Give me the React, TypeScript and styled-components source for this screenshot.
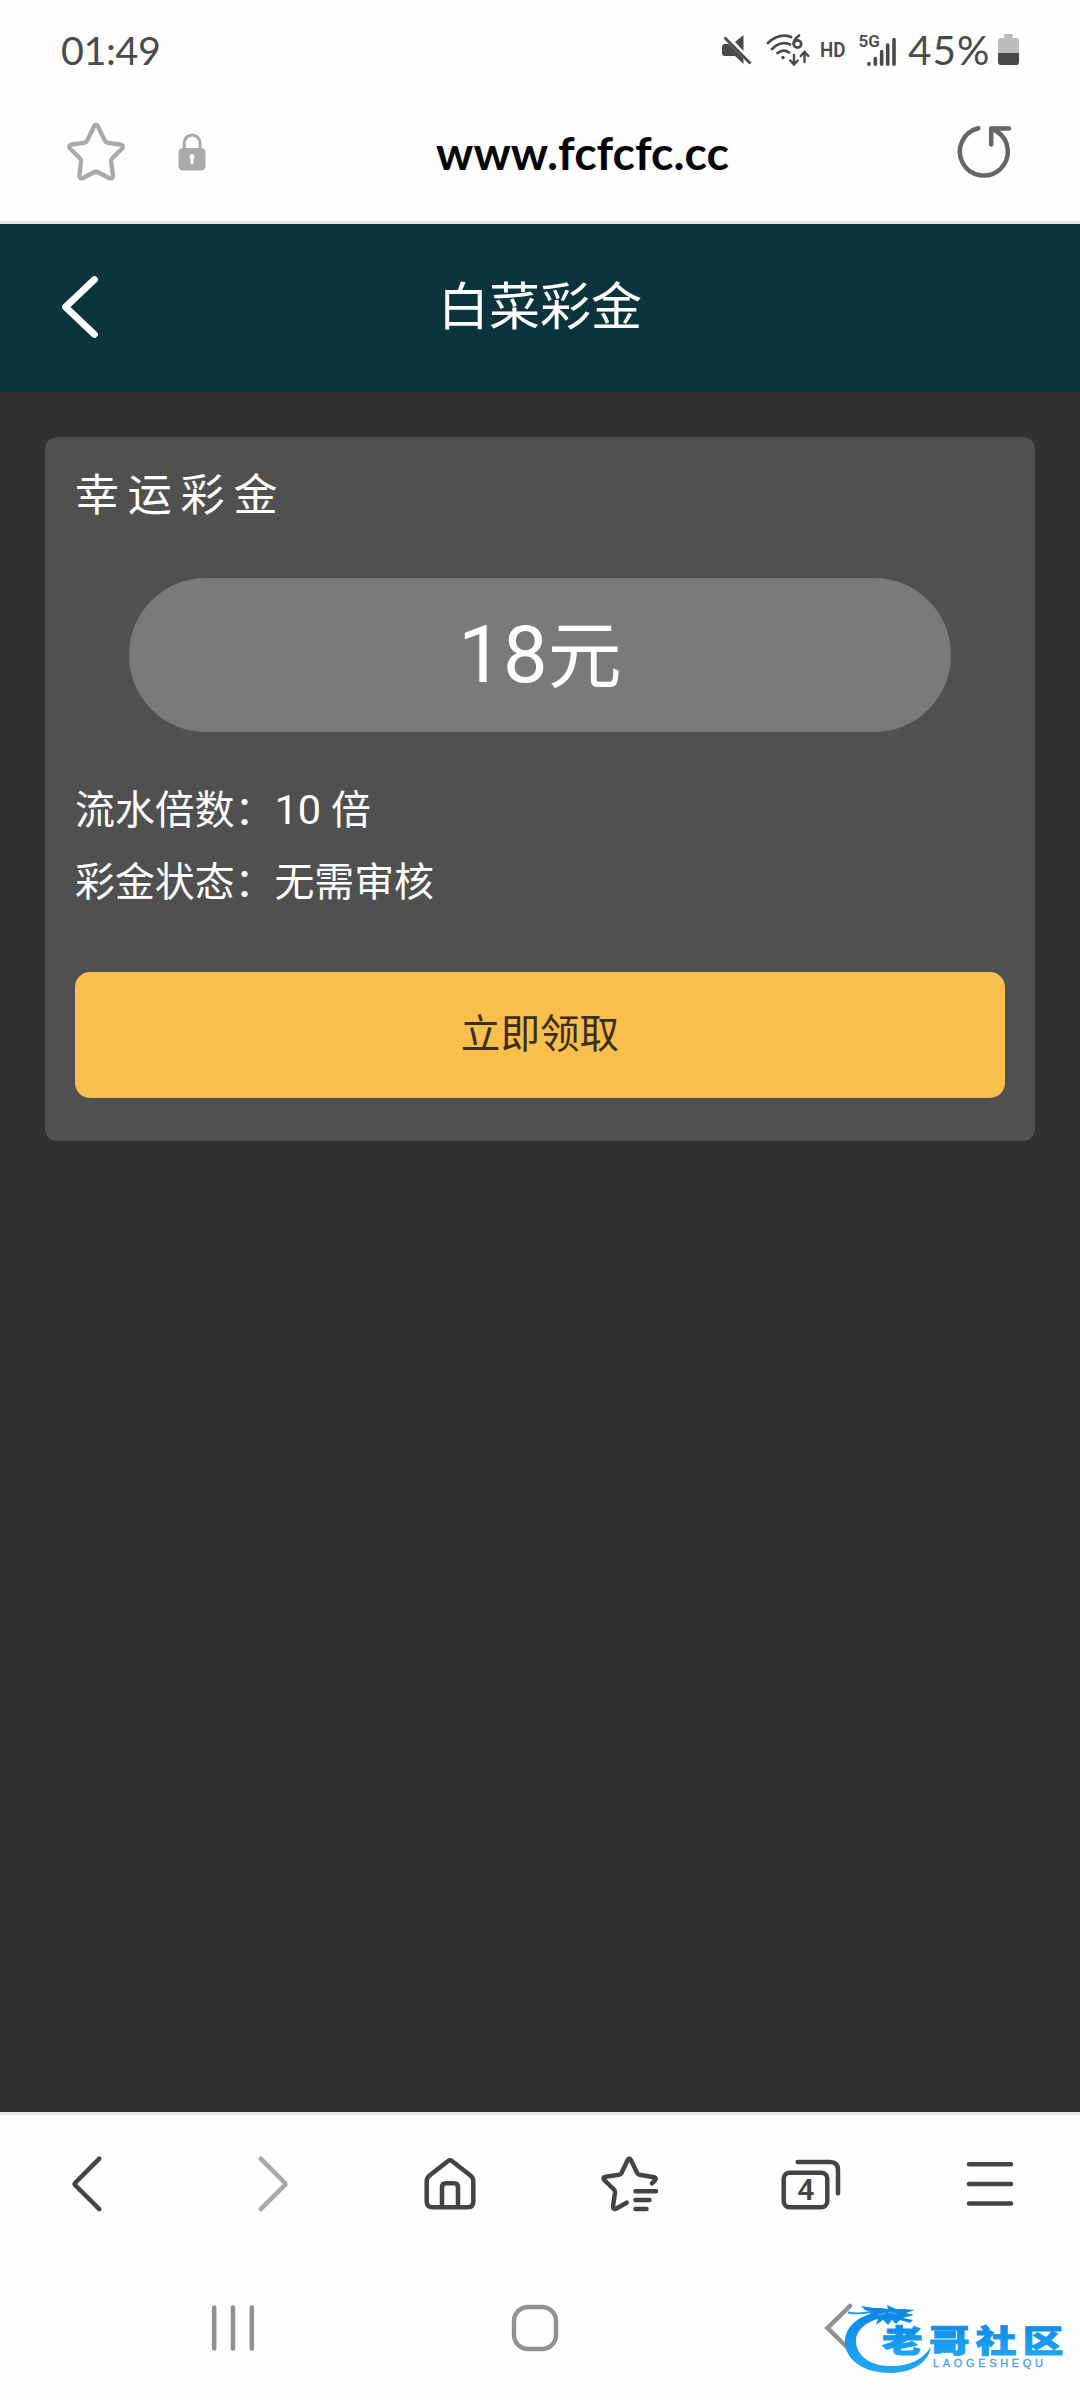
import React from "react";
import styled, { createGlobalStyle } from "styled-components";

const INK = "#444444";
const cjk = `Roboto, "Noto Sans CJK SC", sans-serif`;

const GlobalStyle = createGlobalStyle`
  * { box-sizing: border-box; }
  body { margin: 0; background: #fefefe; }
`;

const Screen = styled.div`
  position: relative;
  display: flex;
  flex-direction: column;
  width: 1080px;
  height: 2400px;
  background: #fefefe;
  overflow: hidden;
  font-family: ${cjk};
`;

const StatusBar = styled.header`
  display: flex;
  flex: none;
  align-items: center;
  height: 100px;
  padding: 0 61px 0 61px;
  color: #4a4a4a;
`;

const Clock = styled.span`
  flex: 1;
  font: 400 39.5px/100px Lato, sans-serif;
  letter-spacing: -0.4px;
`;

const StatusIcon = styled.svg<{ $gap: number }>`
  flex: none;
  margin-right: ${(p) => p.$gap}px;
`;

const Percent = styled.span`
  width: 90px;
  font: 400 40.5px/100px Lato, sans-serif;
  white-space: nowrap;
  letter-spacing: 1px;
`;

const AddressBar = styled.div`
  display: grid;
  flex: none;
  grid-template-columns: 60px 28px 1fr 60px;
  column-gap: 52px;
  align-items: center;
  height: 124px;
  padding: 0 66px 17px;
  border-bottom: 3px solid #dfe5e5;
`;

const Url = styled.span`
  padding-left: 5px;
  text-align: center;
  font: 700 46.5px/60px Lato, sans-serif;
  color: #050505;
  white-space: nowrap;
`;

const TitleBar = styled.div`
  display: grid;
  flex: none;
  grid-template-columns: 60px 1fr 60px;
  align-items: center;
  height: 168px;
  padding: 0 50px;
  background: #0c343c;
`;

const PageTitle = styled.h1`
  margin: 0;
  text-align: center;
  font-size: 51px;
  line-height: 80px;
  font-weight: 400;
  color: #fff;
`;

const Page = styled.main`
  flex: none;
  height: 1720px;
  padding: 45px;
  background: #303030;
`;

const Card = styled.section`
  display: flex;
  flex-direction: column;
  height: 704px;
  padding: 29px 30px 43px;
  border-radius: 12px;
  background: #505050;
  color: #fff;
`;

const CardTitle = styled.h2`
  margin: 0 0 52px;
  font-size: 44px;
  line-height: 60px;
  font-weight: 400;
  letter-spacing: 8.8px;
`;

const Amount = styled.div`
  display: flex;
  align-items: baseline;
  justify-content: center;
  height: 154px;
  margin: 0 54px;
  border-radius: 77px;
  background: #7a7a7a;
  font-size: 79.5px;
  line-height: 154px;
`;

const Unit = styled.span`
  font-size: 74px;
`;

const Details = styled.div`
  display: flex;
  flex-direction: column;
  margin-top: 42px;
`;

const Detail = styled.p`
  margin: 0;
  font-size: 39.9px;
  line-height: 72px;
`;

const Figure = styled.span`
  font-size: 41.5px;
`;

const ClaimButton = styled.button`
  height: 126px;
  margin: auto 0 0;
  padding: 0 0 9px;
  border: 0;
  border-radius: 15px;
  background: #f8bf4c;
  color: #3b2e14;
  font-family: ${cjk};
  font-size: 39.6px;
`;

const Toolbar = styled.nav`
  display: grid;
  flex: none;
  grid-template-columns: repeat(6, 180px);
  justify-items: center;
  align-items: center;
  height: 141px;
  border-top: 3px solid #e8e8e8;
`;

const SystemNav = styled.nav`
  display: flex;
  flex: none;
  align-items: center;
  gap: 252px;
  height: 147px;
  padding: 3px 0 0 208px;
`;

const Watermark = styled.svg`
  position: absolute;
  left: 840px;
  top: 2296px;
`;

type ToolProps = { color?: string; children: React.ReactNode };
const Tool = ({ color = INK, children }: ToolProps) => (
  <svg width="72" height="72" viewBox="0 0 72 72" fill="none" stroke={color}
    strokeWidth="4.5" strokeLinecap="round" strokeLinejoin="round">
    {children}
  </svg>
);

const StatusIcons = () => (
  <>
    <StatusIcon $gap={14} width="30" height="36" viewBox="0 0 30 36">
      <path d="M0 15q0-3 3-3h4L21.500 26.500V32L13 24H3q-3 0-3-3z" fill="#4a4a4a" />
      <path d="M13 10 21.500 3v16z" fill="#4a4a4a" />
      <path d="M2.500 5.500 28.500 31.500" stroke="#4a4a4a" strokeWidth="2.800" />
    </StatusIcon>
    <StatusIcon $gap={10} width="44" height="36" viewBox="0 0 44 36" fill="none"
      stroke="#4a4a4a" strokeWidth="2.700" strokeLinecap="round">
      <path d="M2 11Q13 .5 25 5M6 17Q15 8.500 24 12.500M11.500 21Q17.500 16.500 23 20.500" />
      <circle cx="17" cy="25.500" r="1.700" fill="#4a4a4a" stroke="none" />
      <path d="M28 23v9m-3.800-3.500L28 32.500l3.800-4M38.500 30V20m-3.800 4 3.800-4.200 3.800 4.200" strokeWidth="2.400" />
      <path d="M33 3.500Q28 7 27.500 12" />
      <circle cx="31.500" cy="12" r="3.700" />
    </StatusIcon>
    <StatusIcon $gap={12} width="26" height="36" viewBox="0 0 26 36">
      <text x="0" y="24.500" fontFamily="Roboto" fontSize="20" fontWeight="600" fill="#4a4a4a" textLength="25.500" lengthAdjust="spacingAndGlyphs">HD</text>
    </StatusIcon>
    <StatusIcon $gap={12} width="38" height="36" viewBox="0 0 38 36">
      <text x="0.500" y="14.500" fontFamily="Roboto" fontSize="17" fontWeight="600" fill="#4a4a4a">5G</text>
      <path d="M11 31.500v.8M17.300 26.500v5.800M23.700 19.500v12.800M29.700 13v19.300M36 7.500v24.800"
        stroke="#4a4a4a" strokeWidth="3.600" strokeLinecap="round" />
    </StatusIcon>
    <Percent>45%</Percent>
    <StatusIcon $gap={0} width="21" height="36" viewBox="0 0 21 36">
      <path d="M6 4q0-2 2-2h5q2 0 2 2v2h3q3 0 3 3v12H0V9q0-3 3-3h3z" fill="#bdbdbd" />
      <path d="M0 21h21v9q0 3-3 3H3q-3 0-3-3z" fill="#4a4a4a" />
    </StatusIcon>
  </>
);

const App = () => (
  <>
    <GlobalStyle />
    <Screen>
      <StatusBar>
        <Clock>01:49</Clock>
        <StatusIcons />
      </StatusBar>

      <AddressBar>
        <svg width="60" height="60" viewBox="0 0 60 60" fill="none" stroke="#a9a9a9" strokeWidth="4.300" strokeLinejoin="round">
          <path d="M28 4.500Q30 1 32 4.500L39 19Q40 20.500 42 20.800L54.500 22.500Q58.500 23.500 56 26.700L46.500 36Q45 37.500 45.200 39.500L47 54Q46.500 57.500 43 56L31.500 50Q30 49.300 28.500 50L17 56Q13.500 57.500 13.300 54L15 39.500Q15.200 37.500 13.700 36L4.300 26.700Q1.500 23.500 5.500 22.500L18 20.800Q20 20.500 21 19Z" />
        </svg>
        <svg width="28" height="40" viewBox="0 0 28 40">
          <path d="M6.200 18V11a7.900 7.900 0 0 1 15.800 0v7" fill="none" stroke="#a9a9a9" strokeWidth="3" />
          <rect x=".5" y="16" width="27" height="22.500" rx="4.500" fill="#a9a9a9" />
          <path d="M14 25v6" stroke="#fff" strokeWidth="3" strokeLinecap="round" />
          <circle cx="14" cy="24.500" r="2.500" fill="#fff" />
        </svg>
        <Url>www.fcfcfc.cc</Url>
        <svg width="60" height="60" viewBox="0 0 60 60" fill="none" stroke="#666" strokeWidth="4.500" strokeLinecap="round" strokeLinejoin="round">
          <path d="M24.300 6.200A24 24 0 1 0 43 9.500L37.200 6.500M55 6.500H37.200V22.500" />
        </svg>
      </AddressBar>

      <TitleBar>
        <svg width="60" height="72" viewBox="0 0 60 72" fill="none" stroke="#fff" strokeWidth="6.800" strokeLinecap="round" strokeLinejoin="round">
          <path d="M44.500 7.500 15.500 35 44.500 62.500" />
        </svg>
        <PageTitle>白菜彩金</PageTitle>
      </TitleBar>

      <Page>
        <Card>
          <CardTitle>幸运彩金</CardTitle>
          <Amount>18<Unit>元</Unit></Amount>
          <Details>
            <Detail>流水倍数：<Figure>10</Figure> 倍</Detail>
            <Detail>彩金状态：无需审核</Detail>
          </Details>
          <ClaimButton>立即领取</ClaimButton>
        </Card>
      </Page>

      <Toolbar>
        <Tool><path d="M45.300 10.700 21.500 34.500Q20 36 21.500 37.500L45.300 61.200" /></Tool>
        <Tool color="#a8a8a8"><path d="M26.700 10.700 50.500 34.500Q52 36 50.500 37.500L26.700 61.200" /></Tool>
        <Tool>
          <path d="M33.800 13.300Q36 11.500 38.200 13.300L56.500 27.500Q59.300 30 59.300 33V53.500Q59.300 59.300 53.500 59.300H18.500Q12.700 59.300 12.700 53.500V33Q12.700 30 15.500 27.500Z" />
          <path d="M28 59V39.500Q28 35.300 32 35.300H40Q44 35.300 44 39.500V59" />
        </Tool>
        <Tool>
          <path d="M58 35.300 61 32.300Q62.800 30 60 29.200L45.500 26.700Q44 26.500 43.200 25L37 12.200Q35.300 9.500 33.600 12.200L27.500 25Q26.700 26.500 25 26.800L11.500 28.800Q8.200 29.500 10.200 32L20 41.500Q21.200 42.800 21 44.500L19 58.500Q19 62 22 60.700L32.700 54.700" />
          <path d="M41.500 43.300H62M41.500 52H55.500M41.500 61H52.500" />
        </Tool>
        <Tool>
          <rect x="9.700" y="24.700" width="43.600" height="34.600" rx="6" />
          <path d="M23.700 14H56Q64 14 64 22V45.200" />
          <text x="31.700" y="52" textAnchor="middle" fontFamily="Roboto" fontSize="30" fontWeight="600" fill={INK} stroke="none">4</text>
        </Tool>
        <Tool><path d="M15 16.300H57M15 36H57M15 55.500H57" /></Tool>
      </Toolbar>

      <SystemNav>
        <svg width="50" height="50" viewBox="0 0 50 50" stroke="#919191" strokeWidth="4.500" strokeLinecap="round">
          <path d="M6.200 4.500V45.500M25 4.500V45.500M43.800 4.500V45.500" />
        </svg>
        <svg width="50" height="50" viewBox="0 0 50 50" fill="none" stroke="#919191" strokeWidth="4.400">
          <rect x="4" y="4" width="42" height="42" rx="14" />
        </svg>
        <svg width="50" height="50" viewBox="0 0 50 50" fill="none" stroke="#919191" strokeWidth="4.500" strokeLinecap="round">
          <path d="M38 3 15.500 25 38 47" />
        </svg>
      </SystemNav>

      <Watermark width="230" height="84" viewBox="0 0 230 84">
        <defs>
          <linearGradient id="wave" x1="0" y1="0" x2="0" y2="1">
            <stop offset="0" stopColor="#0b84e2" />
            <stop offset="1" stopColor="#20aaf8" />
          </linearGradient>
        </defs>
        <path d="M22 33L11 55L30 75L85 68L75 58L40 66Z" fill="#fefefe" />
        <path d="M30 18C14 23 4 34 5 48C7 66 26 77 50 77C70 77 88 68 91 51C82 65 66 71 48 70C28 69 15 58 16 43C17 34 26 26 38 23L36 29L43 24L48 29L52 24L56 28L60 24L70 27L73 24L63 22L74 19L66 17L75 14L64 13L56 13L47 9L48 13L40 12L34 12L21 10L25 14L31 16Z" fill="url(#wave)" />
        <path d="M8 16.500Q18 18.500 31 16" fill="none" stroke="#2b97ea" strokeWidth="1.800" />
        <path d="M48 16l9 2M38 19l8-2" stroke="#5cb5f8" strokeWidth="1.100" />
        <text transform="translate(42 56) scale(1.310 1)" fontFamily="'Noto Sans CJK SC', sans-serif" fontSize="31" fontWeight="900"
          letterSpacing="4.800" fill="url(#wave)" stroke="url(#wave)" strokeWidth="1">老哥社区</text>
        <text x="93" y="71" fontFamily="'Liberation Sans', sans-serif" fontSize="11" textLength="110" fill="#429fe8" stroke="#429fe8" strokeWidth=".3">LAOGESHEQU</text>
      </Watermark>
    </Screen>
  </>
);

export default App;
